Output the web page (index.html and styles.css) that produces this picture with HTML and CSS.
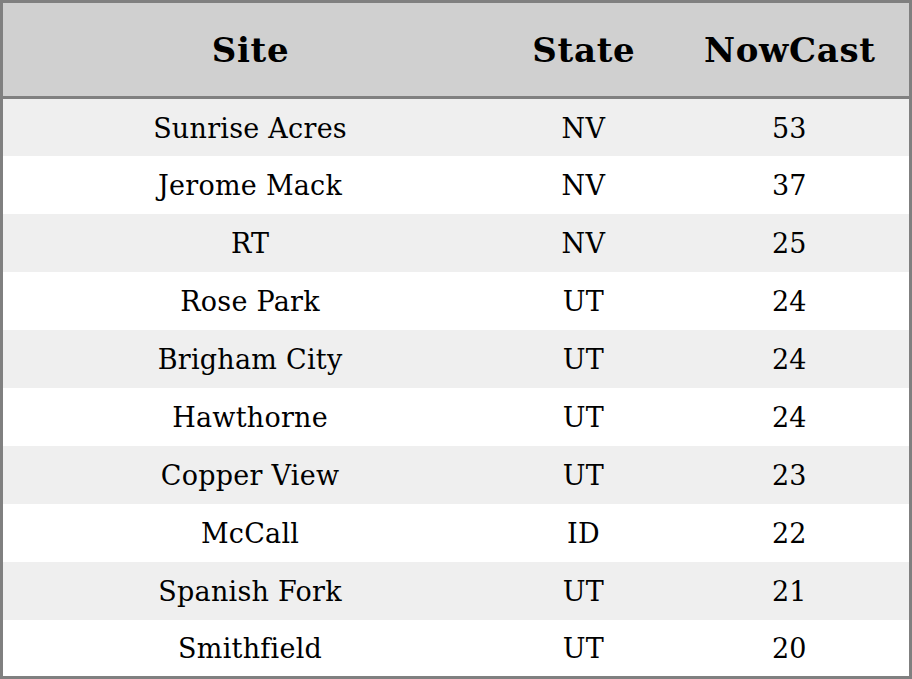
FILE: index.html
```html
<!DOCTYPE html>
<html>
<head>
<meta charset="utf-8">
<link rel="stylesheet" href="styles.css">
</head>
<body>
<table class="grid">
  <colgroup>
    <col class="c-site">
    <col class="c-state">
    <col class="c-now">
  </colgroup>
  <thead>
    <tr><th>Site</th><th>State</th><th>NowCast</th></tr>
  </thead>
  <tbody>
    <tr><td>Sunrise Acres</td><td>NV</td><td>53</td></tr>
    <tr><td>Jerome Mack</td><td>NV</td><td>37</td></tr>
    <tr><td>RT</td><td>NV</td><td>25</td></tr>
    <tr><td>Rose Park</td><td>UT</td><td>24</td></tr>
    <tr><td>Brigham City</td><td>UT</td><td>24</td></tr>
    <tr><td>Hawthorne</td><td>UT</td><td>24</td></tr>
    <tr><td>Copper View</td><td>UT</td><td>23</td></tr>
    <tr><td>McCall</td><td>ID</td><td>22</td></tr>
    <tr><td>Spanish Fork</td><td>UT</td><td>21</td></tr>
    <tr><td>Smithfield</td><td>UT</td><td>20</td></tr>
  </tbody>
</table>
</body>
</html>
```
FILE: styles.css
```css
html, body {
  margin: 0;
  padding: 0;
  background: #ffffff;
}
.grid {
  width: 912px;
  height: 679px;
  border-collapse: collapse;
  border: 3px solid #808080;
  table-layout: fixed;
  font-family: "DejaVu Serif", serif;
  color: #000;
}
.c-site { width: 494px; }
.c-state { width: 172px; }
.c-now { width: 240px; }
.grid th {
  box-sizing: border-box;
  height: 96px;
  padding: 1px 0 0 1px;
  background: #d0d0d0;
  border-bottom: 3px solid #808080;
  font-size: 34px;
  letter-spacing: 0.7px;
  font-weight: bold;
  text-align: center;
  vertical-align: middle;
}
.grid td {
  box-sizing: border-box;
  height: 57.7px;
  padding: 2px 0 0 0;
  font-size: 27px;
  letter-spacing: 0.25px;
  text-align: center;
  vertical-align: middle;
}
.grid tbody tr:nth-child(odd) td {
  background: #efefef;
}
```
